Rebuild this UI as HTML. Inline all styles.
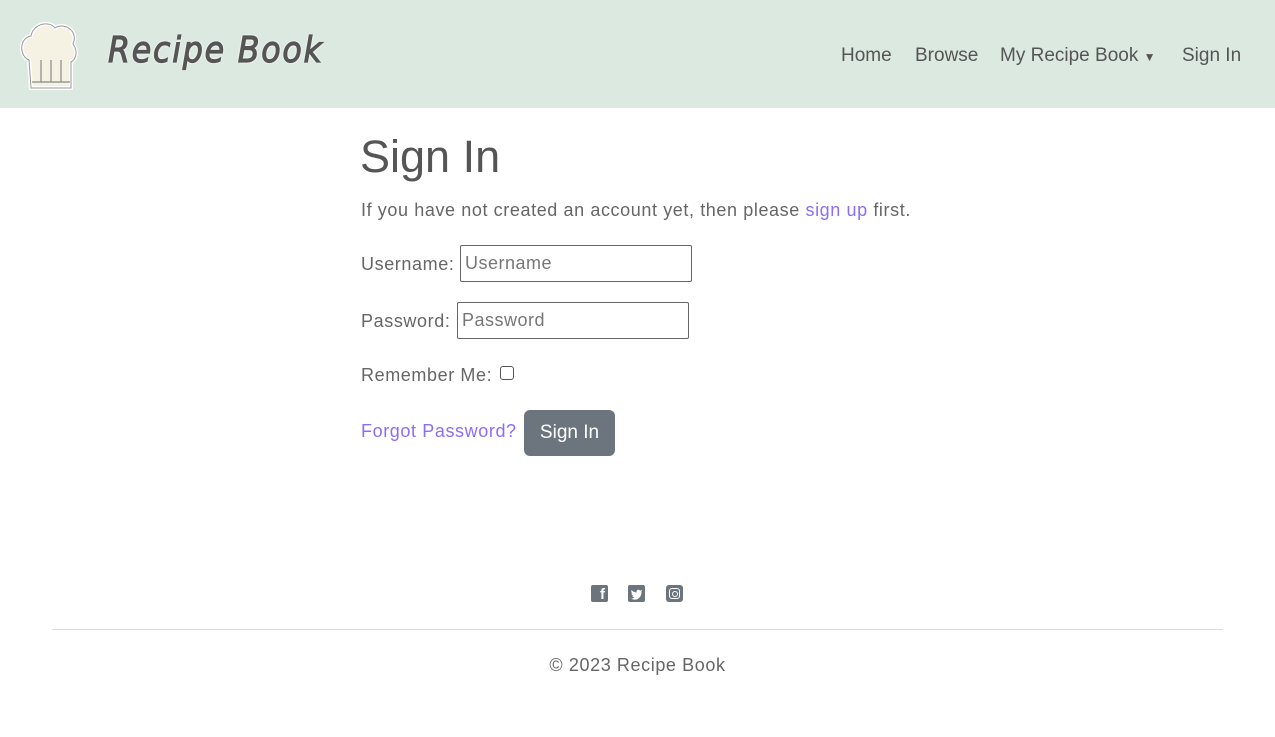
<!DOCTYPE html>
<html><head><style>
body{margin:0;font-family:"Liberation Sans",sans-serif;color:#5a5a5a;background:#fff;width:1275px;height:737px;overflow:hidden;position:relative}
.nav{height:108px;background:#dce9e0;position:relative}
.nav a{position:absolute;top:44px;font-size:19px;color:#555;text-decoration:none}
.abs{position:absolute}
h1{position:absolute;left:360px;top:131px;margin:0;font-weight:normal;font-size:45px;color:#555}
.t{position:absolute;font-size:18px;color:#666;letter-spacing:0.6px}
.in{position:absolute;height:37px;border:1px solid #666;border-radius:2px;box-sizing:border-box;font-size:18px;color:#777;padding:7px 4px;width:232px;letter-spacing:0.5px}
.link{color:#8d6cf8}
</style></head><body>
<div class="nav">
<svg class="abs" style="left:19px;top:20px" width="62" height="72" viewBox="0 0 62 72">
<path d="M10 40 C0 36 0 18 12 16 C14 4 30 0 36 8 C44 2 60 10 54 24 C60 32 56 40 52 42 L52 68 L12 68 Z" fill="#f5f2e3" stroke="#fff" stroke-width="4"/>
<path d="M10 40 C0 36 0 18 12 16 C14 4 30 0 36 8 C44 2 60 10 54 24 C60 32 56 40 52 42 L52 68 L12 68 Z" fill="none" stroke="#999" stroke-width="1"/>
<path d="M22 40 V62 M32 40 V62 M42 40 V62 M13 62 H51" stroke="#888" stroke-width="1.2"/></svg>
<div class="abs" style="left:108px;top:30px;font-family:'DejaVu Sans',sans-serif;font-style:italic;font-size:36px;color:#555;letter-spacing:2px;-webkit-text-stroke:1.2px #555;text-shadow:0 0 3px #fff,0 0 3px #fff;transform:scaleX(0.88);transform-origin:left">Recipe Book</div>
<a style="left:841px;top:45px">Home</a><a style="left:915px;top:45px">Browse</a><a style="left:1000px;top:45px">My Recipe Book <span style="font-size:12px">▼</span></a><a style="left:1182px;top:45px">Sign In</a>
</div>
<h1>Sign In</h1>
<div class="t" style="left:361px;top:200px">If you have not created an account yet, then please <span class="link">sign up</span> first.</div>
<div class="t" style="left:361px;top:254px">Username:</div><div class="in" style="left:460px;top:245px">Username</div>
<div class="t" style="left:361px;top:311px">Password:</div><div class="in" style="left:457px;top:302px">Password</div>
<div class="t" style="left:361px;top:365px">Remember Me:</div>
<div class="abs" style="left:500px;top:366px;width:12px;height:12px;border:1px solid #555;border-radius:3px"></div>
<div class="t link" style="left:361px;top:421px">Forgot Password?</div>
<div class="abs" style="left:524px;top:410px;width:91px;height:46px;background:#6c757d;border-radius:6px;color:#fff;font-size:19px;line-height:46px;text-align:center">Sign In</div>
<div class="abs" style="left:591px;top:585px;width:17px;height:17px;background:#6c757d;border-radius:2px;color:#fff;font-weight:bold;font-size:15px;text-align:right;line-height:20px;box-sizing:border-box;padding-right:3px">f</div>
<svg class="abs" style="left:628px;top:585px" width="17" height="17" viewBox="0 0 17 17"><rect width="17" height="17" rx="2" fill="#6c757d"/><path d="M14 5 C13 5.5 12.5 5.5 12 5.6 C11 4 8 4.5 8.5 7.5 C6.5 7.4 4.7 6.5 3.5 5 C3 6.5 3.6 8 4.5 8.5 C4 8.5 3.7 8.4 3.4 8.2 C3.5 9.6 4.4 10.4 5.5 10.7 C5 10.9 4.6 10.9 4.2 10.8 C4.6 11.8 5.5 12.4 6.5 12.5 C5.4 13.3 4.2 13.6 3 13.5 C9 17 14 12 13.4 6.4 C13.8 6 14 5.5 14 5 Z" fill="#fff"/></svg>
<div class="abs" style="left:666px;top:585px;width:17px;height:17px;background:#6c757d;border-radius:3px"><div style="position:absolute;left:3px;top:3px;width:9px;height:9px;border:1.5px solid #fff;border-radius:3px"></div><div style="position:absolute;left:6px;top:6px;width:4px;height:4px;border:1.3px solid #fff;border-radius:50%"></div></div>
<div class="abs" style="left:52px;top:629px;width:1171px;border-top:1px solid #ddd"></div>
<div class="t" style="left:0;width:1275px;text-align:center;top:655px">© 2023 Recipe Book</div>
</body></html>
